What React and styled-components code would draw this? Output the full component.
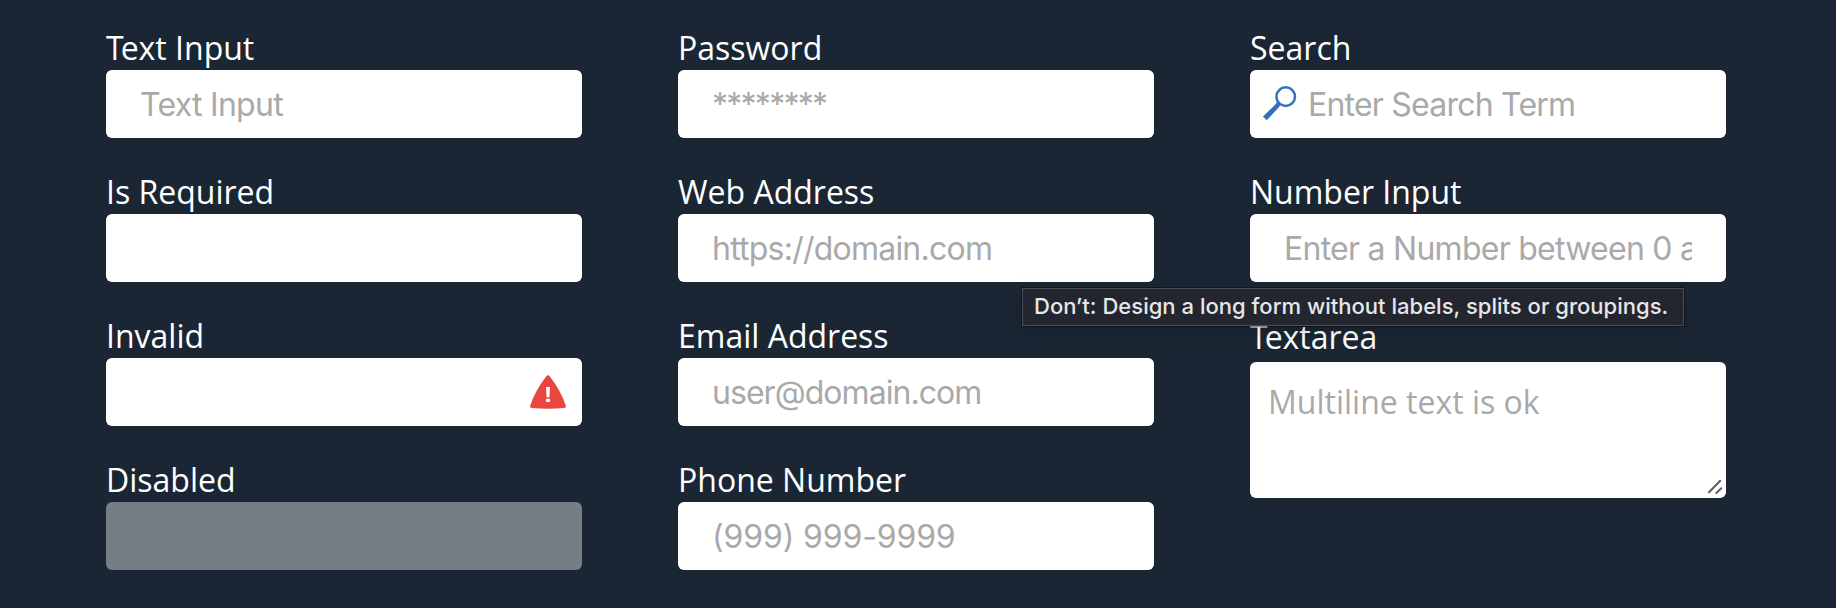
import React from "react";
import styled, { createGlobalStyle, css } from "styled-components";

const GlobalStyle = createGlobalStyle`
  * { box-sizing: border-box; }
  body { margin: 0; background: #1b2634; }
`;

const Page = styled.main`
  position: relative;
  display: grid;
  grid-template-columns: repeat(3, 476px);
  column-gap: 96px;
  align-items: start;
  width: 1836px;
  height: 608px;
  padding: 26px 0 0 106px;
  overflow: hidden;
  background: #1b2634;
`;

const Column = styled.div`
  display: flex;
  flex-direction: column;
  gap: 32px;
`;

const Field = styled.div`
  display: flex;
  flex-direction: column;
`;

const Label = styled.label`
  height: ${(p) => (p.$tall ? 48 : 44)}px;
  padding-top: ${(p) => (p.$tall ? 1 : 0)}px;
  font: 400 32px/44px "Open Sans", "Noto Sans", sans-serif;
  white-space: nowrap;
  color: #ffffff;
  &::first-letter { letter-spacing: ${(p) => (p.$tightStart ? -3 : 0)}px; }
`;

const Control = styled.div`
  position: relative;
  display: flex;
`;

const surface = css`
  width: 100%;
  margin: 0;
  border: 0;
  border-radius: 6px;
  outline: 0;
  background: #ffffff;
  &::placeholder { color: #a9a9a9; opacity: 1; }
`;

const Input = styled.input`
  ${surface}
  height: 68px;
  padding: 1px 34px 0 ${(p) => (p.$withIcon ? 58 : 34)}px;
  font: 400 32px/39px Inter, sans-serif;
  letter-spacing: ${(p) => p.$spacing || 0}px;
  &:disabled { background: #777d85; }
`;

const Textarea = styled.textarea`
  ${surface}
  display: block;
  height: 136px;
  padding: 18px 18px;
  resize: none;
  font: 400 32px/44px "Open Sans", "Noto Sans", sans-serif;
`;

const Adornment = styled.svg`
  position: absolute;
  pointer-events: none;
`;

const SearchMark = styled(Adornment)`
  left: 12px;
  top: 15px;
`;

const AlertMark = styled(Adornment)`
  right: 16px;
  top: 17px;
`;

const Grip = styled(Adornment)`
  right: 2px;
  bottom: 2px;
`;

const Tooltip = styled.div`
  position: absolute;
  left: 1022px;
  top: 288px;
  width: 662px;
  height: 38px;
  padding-left: 11px;
  border: 1px solid #4b4e54;
  background: #23262f;
  box-shadow: 0 0 0 1px rgba(0, 0, 0, 0.4), 0 6px 20px rgba(0, 0, 0, 0.16);
  font: 500 22px/35px Inter, sans-serif;
  letter-spacing: 0.02px;
  white-space: nowrap;
  color: #e6e7e8;
`;

const SearchIcon = () => (
  <SearchMark width="36" height="36" viewBox="0 0 36 36" fill="none">
    <circle cx="23.7" cy="11.6" r="9.3" stroke="#3371c0" strokeWidth="2.5" />
    <path d="M15.2 17 L18.5 20 L15.8 23.6 L4.7 35.2 L0.9 31.6 L12.6 20.2 Z" fill="#3371c0" />
  </SearchMark>
);

const AlertIcon = () => (
  <AlertMark width="36" height="34" viewBox="0 0 36 34">
    <path
      d="M16.1 1.6 Q18 -0.9 19.9 1.6 Q31 16 35.7 30.5 Q36.4 32.7 34.2 33 Q18 34.5 1.8 33 Q-0.4 32.7 0.3 30.5 Q5 16 16.1 1.6 Z"
      fill="#ea453f"
    />
    <path d="M16 12 H20 L19.4 22.3 H16.6 Z" fill="#fff" />
    <ellipse cx="18" cy="25.4" rx="2.3" ry="1.8" fill="#fff" />
  </AlertMark>
);

const ResizeGrip = () => (
  <Grip width="18" height="18" viewBox="0 0 18 18" stroke="#5f5f62" strokeWidth="2" strokeLinecap="round">
    <path d="M3 14.3 L14.2 2.8 M10.3 15 L15.3 10.2" />
  </Grip>
);

const columns = [
  [
    { id: "text", label: "Text Input", placeholder: "Text Input", spacing: -0.72, tightStart: true },
    { id: "required", label: "Is Required", required: true },
    { id: "invalid", label: "Invalid", icon: "alert" },
    { id: "disabled", label: "Disabled", disabled: true },
  ],
  [
    { id: "password", label: "Password", type: "password", placeholder: "********", spacing: -1.75 },
    { id: "url", label: "Web Address", type: "url", placeholder: "https://domain.com", spacing: -0.77 },
    { id: "email", label: "Email Address", type: "email", placeholder: "user@domain.com", spacing: -0.95 },
    { id: "phone", label: "Phone Number", type: "tel", placeholder: "(999) 999-9999", spacing: -0.14 },
  ],
  [
    { id: "search", label: "Search", placeholder: "Enter Search Term", icon: "search", spacing: -0.78 },
    { id: "number", label: "Number Input", placeholder: "Enter a Number between 0 and 100", spacing: -0.74 },
    { id: "area", label: "Textarea", placeholder: "Multiline text is ok", multiline: true, tightStart: true },
  ],
];

const FormField = ({ id, label, multiline, type = "text", placeholder, icon, disabled, required, spacing, tightStart }) => (
  <Field>
    <Label htmlFor={id} $tall={multiline} $tightStart={tightStart}>{label}</Label>
    <Control>
      {multiline ? (
        <Textarea id={id} placeholder={placeholder} />
      ) : (
        <Input
          id={id}
          type={type}
          placeholder={placeholder}
          disabled={disabled}
          required={required}
          $withIcon={icon === "search"}
          $spacing={spacing}
        />
      )}
      {icon === "search" && <SearchIcon />}
      {icon === "alert" && <AlertIcon />}
      {multiline && <ResizeGrip />}
    </Control>
  </Field>
);

export default function App() {
  return (
    <>
      <GlobalStyle />
      <Page>
        {columns.map((fields) => (
          <Column key={fields[0].id}>
            {fields.map((field) => (
              <FormField key={field.id} {...field} />
            ))}
          </Column>
        ))}
        <Tooltip role="tooltip">Don’t: Design a long form without labels, splits or groupings.</Tooltip>
      </Page>
    </>
  );
}
